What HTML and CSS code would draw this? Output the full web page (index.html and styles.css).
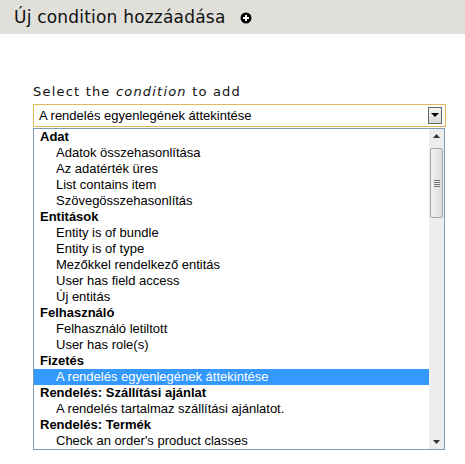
FILE: index.html
```html
<!DOCTYPE html>
<html>
<head>
<meta charset="utf-8">
<link rel="stylesheet" href="styles.css">
</head>
<body>
<div class="header">
  <h2 class="title">Új condition hozzáadása</h2>
  <svg class="plus" width="12" height="12" viewBox="0 0 12 12"><circle cx="6" cy="6" r="5.5" fill="#000"/><path d="M3 6h6M6 3v6" stroke="#fff" stroke-width="2"/></svg>
</div>
<div class="form">
  <label class="label">Select the <em>condition</em> to add</label>
  <div class="select">
    <span class="value">A rendelés egyenlegének áttekintése</span>
    <span class="btn"><svg width="8" height="5" viewBox="0 0 8 5"><path d="M0 0h8L4 4z" fill="#000"/></svg></span>
  </div>
  <div class="list">
    <div class="items">
      <div class="grp">Adat</div>
      <div class="opt">Adatok összehasonlítása</div>
      <div class="opt">Az adatérték üres</div>
      <div class="opt">List contains item</div>
      <div class="opt">Szövegösszehasonlítás</div>
      <div class="grp">Entitások</div>
      <div class="opt">Entity is of bundle</div>
      <div class="opt">Entity is of type</div>
      <div class="opt">Mezőkkel rendelkező entitás</div>
      <div class="opt">User has field access</div>
      <div class="opt">Új entitás</div>
      <div class="grp">Felhasználó</div>
      <div class="opt">Felhasználó letiltott</div>
      <div class="opt">User has role(s)</div>
      <div class="grp">Fizetés</div>
      <div class="opt sel">A rendelés egyenlegének áttekintése</div>
      <div class="grp">Rendelés: Szállítási ajánlat</div>
      <div class="opt">A rendelés tartalmaz szállítási ajánlatot.</div>
      <div class="grp">Rendelés: Termék</div>
      <div class="opt">Check an order's product classes</div>
    </div>
    <div class="scroll">
      <div class="arrow"><svg width="7" height="4" viewBox="0 0 7 4"><path d="M0 4h7L3.5 0z" fill="#333"/></svg></div>
      <div class="track">
        <div class="thumb"><span></span><span></span><span></span><span></span></div>
      </div>
      <div class="arrow"><svg width="7" height="4" viewBox="0 0 7 4"><path d="M0 0h7L3.5 4z" fill="#333"/></svg></div>
    </div>
  </div>
</div>
</body>
</html>
```
FILE: styles.css
```css
body {
  margin: 0;
  background: #fff;
  font-family: "DejaVu Sans", sans-serif;
}
.header {
  background: #e0dfd9;
  height: 34px;
  display: flex;
  align-items: center;
  padding-left: 14px;
  gap: 14px;
}
.title {
  margin: 0;
  font-weight: normal;
  font-size: 17px;
  color: #111;
  letter-spacing: 0.2px;
}
.plus { margin-top: 1px; }
.form {
  padding: 50px 0 0 33px;
}
.label {
  display: block;
  font-size: 13px;
  letter-spacing: 1.2px;
  color: #111;
  height: 20px;
}
.label em { font-style: italic; }
.select {
  width: 411px;
  height: 21px;
  border: 1px solid #e3b85a;
  display: flex;
  align-items: center;
  justify-content: space-between;
  box-sizing: content-box;
}
.value {
  font-family: "Liberation Sans", sans-serif;
  font-size: 13px;
  padding-left: 5px;
  color: #000;
}
.btn {
  width: 12px;
  height: 15px;
  border: 1px solid #666;
  background: linear-gradient(#f4f4f4, #d8d8d8);
  display: flex;
  align-items: center;
  justify-content: center;
  margin-right: 3px;
}
.list {
  margin-top: 1px;
  width: 410px;
  height: 320px;
  border: 1px solid #7f9db9;
  display: flex;
  font-family: "Liberation Sans", sans-serif;
  font-size: 13px;
  color: #000;
}
.items { flex: 1; overflow: hidden; }
.grp, .opt {
  height: 16px;
  line-height: 16px;
  white-space: nowrap;
}
.grp { font-weight: bold; padding-left: 6px; }
.opt { padding-left: 22px; }
.opt.sel { background: #3399ff; color: #fff; }
.scroll {
  width: 15px;
  background: #eeedeb;
  display: flex;
  flex-direction: column;
}
.arrow {
  height: 14px;
  display: flex;
  align-items: center;
  justify-content: center;
}
.track { flex: 1; padding-top: 5px; }
.thumb {
  height: 68px;
  margin: 0 1px;
  border: 1px solid #a6a6a6;
  border-radius: 2px;
  background: linear-gradient(90deg, #f3f3f3, #dcdcdc);
  display: flex;
  flex-direction: column;
  align-items: center;
  justify-content: center;
  gap: 1px;
}
.thumb span {
  width: 6px;
  height: 1px;
  background: #777;
}
```
